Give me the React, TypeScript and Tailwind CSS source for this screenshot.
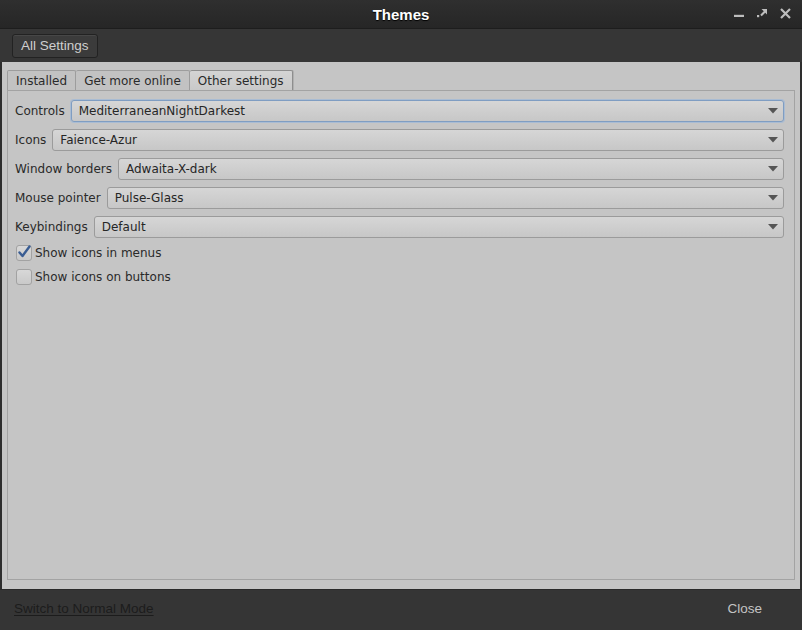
import React from 'react';

const rows = [
  { label: 'Controls', value: 'MediterraneanNightDarkest', focused: true },
  { label: 'Icons', value: 'Faience-Azur' },
  { label: 'Window borders', value: 'Adwaita-X-dark' },
  { label: 'Mouse pointer', value: 'Pulse-Glass' },
  { label: 'Keybindings', value: 'Default' },
];

function Combo({ value, focused }: { value: string; focused?: boolean }) {
  return (
    <div
      className={
        'flex-1 h-[22px] flex items-center pl-[7px] pr-[5px] rounded-[3px] bg-gradient-to-b from-[#d6d6d6] to-[#c7c7c7] ' +
        (focused ? 'border border-[#7f9dc2] shadow-[0_0_0_1px_#a9bcd3]' : 'border border-[#9b9b9b]')
      }
    >
      <span className="flex-1 text-[12px] text-[#262626] leading-none">{value}</span>
      <svg width="10" height="6" viewBox="0 0 10 6">
        <path d="M0 0 L10 0 L5 5.5 Z" fill="#555" />
      </svg>
    </div>
  );
}

function Check({ checked, label }: { checked?: boolean; label: string }) {
  return (
    <div className="h-[16px] flex items-center gap-[3px]">
      <div className="w-[16px] h-[16px] rounded-[3px] border border-[#a2a2a2] bg-gradient-to-b from-[#d8d8d8] to-[#c9c9c9] relative">
        {checked && (
          <svg width="16" height="16" viewBox="0 0 16 16" className="absolute -left-[1px] -top-[2px]">
            <path d="M3.5 8.5 L6.5 12 L13.5 2.5" stroke="#3a5d93" strokeWidth="2.4" fill="none" strokeLinecap="round" strokeLinejoin="round" />
          </svg>
        )}
      </div>
      <span className="text-[12px] text-[#2a2a2a]">{label}</span>
    </div>
  );
}

export default function App() {
  return (
    <div className="w-[802px] h-[630px] flex flex-col bg-[#2c2c2c] font-['DejaVu_Sans',sans-serif] overflow-hidden">
      {/* Title bar */}
      <div className="h-[29px] shrink-0 relative flex items-center justify-center pt-[3px] bg-gradient-to-b from-[#2f2f2f] to-[#262626] border-b border-[#1d1d1d]">
        <span className="font-['Liberation_Sans',sans-serif] font-bold text-[15px] text-white [text-shadow:0_1px_1px_#000]">Themes</span>
        <div className="absolute right-[11px] top-0 h-[28px] flex items-start gap-[12px]">
          <svg width="11" height="28" viewBox="0 0 11 28">
            <rect x="0" y="14.8" width="10" height="2.2" fill="#bdbdbd" />
          </svg>
          <svg width="11" height="28" viewBox="0 0 11 28">
            <rect x="0" y="15" width="2.2" height="2.2" fill="#bdbdbd" />
            <path d="M4 15.5 L8.5 11" stroke="#bdbdbd" strokeWidth="2" />
            <path d="M4.5 9 L10 9 L10 14.5 Z" fill="#bdbdbd" />
          </svg>
          <svg width="11" height="28" viewBox="0 0 11 28">
            <path d="M1 9 L10 18 M10 9 L1 18" stroke="#bdbdbd" strokeWidth="2.2" />
          </svg>
        </div>
      </div>

      {/* Toolbar */}
      <div className="h-[33px] shrink-0 flex items-center pl-[12px] bg-[#363636]">
        <button className="h-[24px] px-[8px] rounded-[3px] border border-[#222] bg-[#3b3b3b] shadow-[inset_0_1px_0_#474747] text-[13.5px] text-[#cfcfcf] font-['Liberation_Sans',sans-serif] leading-none">
          All Settings
        </button>
      </div>

      {/* Content */}
      <div className="flex-1 flex flex-col bg-[#c5c5c5] border-x-2 border-[#2e2e2e] pl-[5px] pr-[5px] pt-[8px] pb-[9px]">
        <div className="flex h-[20px] shrink-0 items-end">
          <div className="h-[20px] px-[8px] flex items-center border border-b-0 border-[#9d9d9d] rounded-t-[2px] bg-[#c2c2c2] text-[12px] text-[#2a2a2a]">Installed</div>
          <div className="h-[20px] px-[8px] flex items-center border border-l-0 border-b-0 border-[#9d9d9d] rounded-t-[2px] bg-[#c2c2c2] text-[12px] text-[#2a2a2a]">Get more online</div>
          <div className="h-[20px] px-[8px] flex items-center border border-l-0 border-b-0 border-[#8e8e8e] rounded-t-[2px] bg-gradient-to-b from-[#d4d4d4] to-[#c9c9c9] text-[12px] text-[#2a2a2a] shadow-[1px_0_0_#b0b0b0]">Other settings</div>
        </div>
        <div className="flex-1 border border-[#a3a3a3] pt-[9px] pl-[7px] pr-[10px] flex flex-col">
          <div className="flex flex-col gap-[7px]">
            {rows.map(r => (
              <div key={r.label} className="flex items-center gap-[6px]">
                <span className="text-[12px] text-[#2a2a2a] whitespace-nowrap">{r.label}</span>
                <Combo value={r.value} focused={r.focused} />
              </div>
            ))}
          </div>
          <div className="mt-[7px] flex flex-col gap-[8px] pl-[1px]">
            <Check checked label="Show icons in menus" />
            <Check label="Show icons on buttons" />
          </div>
        </div>
      </div>

      {/* Footer */}
      <div className="h-[41px] shrink-0 flex items-center justify-between pl-[14px] pr-[40px] pb-[2px] bg-[#353535] border-t border-[#2a2a2a] font-['Liberation_Sans',sans-serif] text-[13.5px]">
        <span className="text-[#1c1c1c] underline underline-offset-2">Switch to Normal Mode</span>
        <span className="text-[#c4c4c4]">Close</span>
      </div>
    </div>
  );
}
